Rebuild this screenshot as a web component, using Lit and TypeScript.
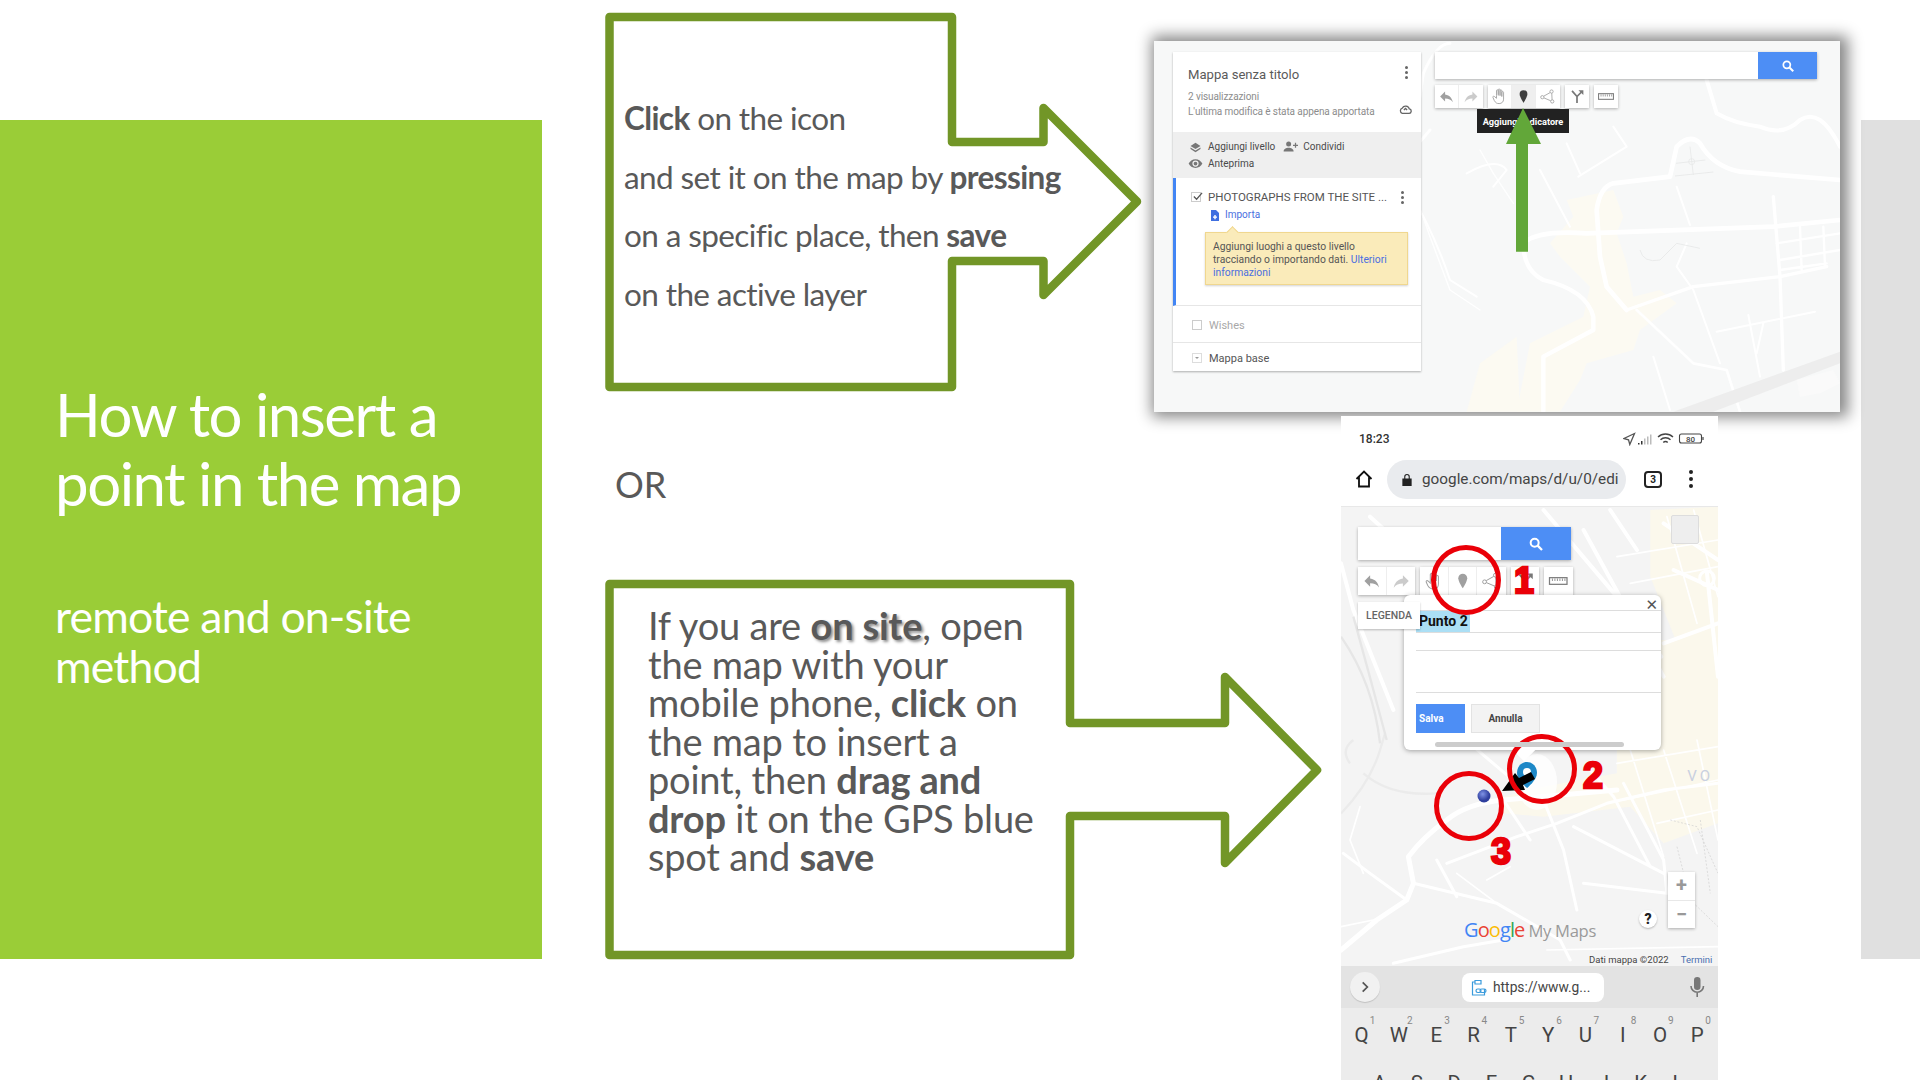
import { LitElement, html, css, svg } from "lit";
import { customElement } from "lit/decorators.js";

const ICONS: Record<string, unknown> = {
  undo: svg`<path fill="currentColor" d="M10 9V5l-7 7 7 7v-4.1c5 0 8.5 1.6 11 5.1-1-5-4-10-11-11z"/>`,
  redo: svg`<path fill="currentColor" opacity=".55" d="M14 9V5l7 7-7 7v-4.1c-5 0-8.5 1.6-11 5.1 1-5 4-10 11-11z"/>`,
  hand: svg`<path transform="translate(-3.500 -3) scale(1.250)" fill="none" stroke="currentColor" stroke-width="1" d="M9 11V5.5a1 1 0 012 0V11M11 10V4.5a1 1 0 012 0V11M13 11V5.5a1 1 0 012 0V12M15 12V7.5a1 1 0 012 0V15c0 3-2 5-5 5s-4-1-5.5-3.5L5 13a1 1 0 011.7-1L9 14V11"/>`,
  pin: svg`<path fill="currentColor" d="M12 3a5.5 5.5 0 00-5.5 5.5C6.5 12.5 12 21 12 21s5.500-8.500 5.500-12.500A5.500 5.500 0 0012 3z"/>`,
  poly: svg`<g fill="none" stroke="currentColor" stroke-width="1.2"><circle cx="17" cy="5" r="2.300"/><circle cx="4" cy="13" r="2.300"/><circle cx="18" cy="19" r="2.300"/><path d="M15 6.500L6 11.500M6.300 14l9.500 4M17.300 7.300l.5 9.400"/></g>`,
  branch: svg`<g fill="none" stroke="#777" stroke-width="2.400"><path d="M5 4l7 8v9"/><path d="M12 12l6-6"/></g><path fill="#777" d="M14 3h7v7z"/>`,
  ruler: svg`<g fill="none" stroke="#7d7d7d"><rect x="1.500" y="8" width="21" height="8" stroke-width="1.500"/><path stroke-width="1" d="M5 9v3M8 9v3M11 9v3M14 9v3M17 9v3M20 9v3"/></g>`,
};

const icon = (name: string) =>
  html`<svg class="ic" viewBox="0 0 24 24">${ICONS[name]}</svg>`;

const searchIcon = html`<svg class="sr" viewBox="0 0 24 24"><circle cx="10" cy="10" r="6" fill="none" stroke="#fff" stroke-width="3"/><path d="M14.500 14.500L21 21" stroke="#fff" stroke-width="3.400"/></svg>`;

const toolStyles = css`
  .ic { width: 100%; height: 100%; display: block; }
  .sr { display: block; }
  .tools { position: absolute; display: flex; }
  .group { display: flex; background: #fff; box-shadow: 0 1px 3px rgba(0,0,0,.3); }
  .tool { color: #a0a0a0; display: flex; align-items: center; justify-content: center; box-sizing: border-box; border-right: 1px solid #eee; }
  .tool:last-child { border-right: 0; }
  .tool.on { background: #efefef; color: #3f3f3f; }
`;

@customElement("callout-arrow")
class CalloutArrow extends LitElement {
  static properties = { points: { type: String }, vb: { type: String } };
  points = "";
  vb = "";
  static styles = css`
    :host { display: block; position: relative; }
    svg { position: absolute; inset: 0; width: 100%; height: 100%; overflow: visible; }
    polygon { fill: #fff; stroke: #729627; stroke-width: 8.5; stroke-linejoin: round; }
    .body { position: relative; }
  `;
  render() {
    return html`<svg viewBox=${this.vb}><polygon points=${this.points}></polygon></svg><div class="body"><slot></slot></div>`;
  }
}

@customElement("desktop-shot")
class DesktopShot extends LitElement {
  static styles = [toolStyles, css`
    :host { display: block; position: relative; width: 686px; height: 371px; background: #f7f8f8; box-shadow: 3px 0 14px 5px rgba(0,0,0,.48); font-family: Roboto, "Liberation Sans", sans-serif; }
    .map { position: absolute; inset: 0; width: 100%; height: 100%; }
    .card { position: absolute; left: 19px; top: 11px; width: 248px; height: 319px; background: #fff; box-shadow: 0 1px 2px rgba(0,0,0,.3); display: flex; flex-direction: column; }
    .head { height: 80px; box-sizing: border-box; padding: 15px 0 0 15px; position: relative; }
    .title { font-size: 13.100px; line-height: 16px; color: #5a5a5a; }
    .meta { font-size: 10px; line-height: 14.500px; color: #8c8c8c; margin-top: 7px; letter-spacing: -.1px; }
    .kebab { position: absolute; display: grid; gap: 2px; }
    .kebab i { display: block; width: 3px; height: 3px; border-radius: 50%; background: #666; }
    .k1 { left: 232px; top: 14px; }
    .k2 { left: 225px; top: 13px; }
    .cloud { position: absolute; left: 226px; top: 51px; width: 13px; height: 13px; }
    .actions { height: 46px; background: #efefef; box-sizing: border-box; padding: 6px 0 0 15px; font-size: 10px; color: #4a4a4a; display: grid; grid-template-rows: 17px 17px; }
    .arow { display: flex; align-items: center; }
    .a-ic { width: 15px; height: 15px; margin-right: 5px; color: #777; flex: none; }
    .a-gap { margin-left: 8px; }
    .layer { height: 128px; border-left: 3.500px solid #4285f4; box-sizing: border-box; position: relative; border-bottom: 1px solid #e6e6e6; }
    .lrow { display: flex; align-items: center; padding: 12px 0 0 15px; font-size: 11.500px; color: #555; line-height: 14px; white-space: nowrap; }
    .check { width: 10px; height: 10px; border: 1px solid #ccc; box-sizing: border-box; margin-right: 7px; flex: none; position: relative; }
    .check svg { position: absolute; left: 0; top: -2px; width: 11px; height: 11px; }
    .import { display: flex; align-items: center; padding: 5px 0 0 35px; color: #4a6fe0; font-size: 10px; line-height: 12px; }
    .import svg { width: 8px; height: 11px; margin-right: 6px; }
    .note { position: absolute; left: 29px; top: 54px; width: 203px; height: 53px; box-sizing: border-box; background: #faebba; border: 1px solid #f0d78f; box-shadow: 0 1px 2px rgba(0,0,0,.18); padding: 7px 8px 0 7px; font-size: 10.300px; line-height: 13px; color: #555; }
    .note a { color: #4a6fe0; }
    .note::before { content: ""; position: absolute; left: 22px; top: -5px; width: 8px; height: 8px; background: #faebba; border-left: 1px solid #f0d78f; border-top: 1px solid #f0d78f; transform: rotate(45deg); }
    .wishes { height: 37px; display: flex; align-items: center; padding: 2px 0 0 19px; font-size: 11px; color: #a8a8a8; border-bottom: 1px solid #e6e6e6; box-sizing: border-box; }
    .base { flex: 1; display: flex; align-items: center; padding: 2px 0 0 19px; font-size: 11px; color: #555; }
    .drop { width: 10px; height: 10px; border: 1px solid #ddd; box-sizing: border-box; margin-right: 7px; position: relative; }
    .drop::after { content: ""; position: absolute; left: 2px; top: 3px; border: 2px solid transparent; border-top: 2px solid #999; }
    .search { position: absolute; left: 281px; top: 11px; width: 382px; height: 27px; background: #fff; box-shadow: 0 1px 3px rgba(0,0,0,.3); display: flex; justify-content: flex-end; }
    .sbtn { width: 59px; background: #4d8ef5; display: flex; align-items: center; justify-content: center; }
    .sbtn .sr { width: 14px; height: 14px; }
    .tools { left: 281px; top: 44px; height: 23px; gap: 5px; }
    .tool { width: 24px; height: 23px; padding: 3px; }
    .tooltip { position: absolute; left: 323px; top: 68px; width: 92px; height: 24px; background: #222; color: #fff; font-size: 9.200px; font-weight: 700; display: flex; align-items: center; justify-content: center; white-space: nowrap; }
    .green { position: absolute; left: 0; top: 0; width: 100%; height: 100%; pointer-events: none; }
  `];
  render() {
    return html`
      <svg class="map" viewBox="-1038 33 2058 1113" preserveAspectRatio="none">
        <path fill="#fcfaf2" d="M200 510L340 480 370 560 350 610 380 700 400 800 480 780 530 820 420 900 400 960 260 1000 240 1050 180 1145 50 1145 90 940 250 860 270 770 180 680 150 640 220 560Z"/>
        <path fill="#fcfaf2" d="M50 920L-60 1000-100 1145 60 1145Z"/>
        <g fill="none" stroke="#fff" stroke-linecap="round" stroke-linejoin="round">
          <path stroke-width="12" d="M620 150L650 250Q700 280 780 290 850 320 900 270 960 230 1020 350"/>
          <path stroke-width="14" d="M1020 450L720 425Q640 410 600 340 570 310 530 350L510 440 340 460Q300 470 290 540L300 680 320 770 380 840"/>
          <path stroke-width="14" d="M70 640Q110 600 260 610L820 590 1020 570"/>
          <path stroke-width="13" d="M70 640Q70 720 130 750 260 780 280 860L280 900 130 980 130 1145"/>
          <path stroke-width="10" d="M380 840L580 770 840 740 980 710"/>
          <path stroke-width="10" d="M820 500L840 740 850 1020"/>
          <path stroke-width="8" d="M410 840L580 1000 680 1020 720 1145"/>
          <path stroke-width="6" d="M580 780L660 1000M460 980L510 1140M650 905L945 845M745 855L780 1040M790 880L770 970M530 470L570 585M560 640L530 710 580 780"/>
          <path stroke-width="7" d="M840 690L1020 660M830 640L1020 610M900 590L905 720M970 590L975 710M840 720L980 700"/>
          <path stroke-width="6" d="M120 420L210 590M235 440L380 350 340 290M200 340L240 430M-100 430Q-10 380 20 420L-20 470M-280 470Q-200 600 -150 750L-70 800"/>
          <path stroke-width="9" d="M-230 130Q-190 40 -150 40M-230 130L-240 200M-210 300Q-260 360 -240 330"/>
          <path stroke-width="4" d="M-270 450L-210 620-150 780-60 840M-60 360L-20 430 40 520"/>
        </g>
        <g fill="none" stroke="#e7e8e8" stroke-width="2.500"><circle cx="575" cy="395" r="9"/><path d="M528 400L616 390M570 350L580 435M525 438L640 426M420 660Q430 700 480 690L530 640 600 655"/></g>
        <path fill="#ededed" d="M520 1145L1020 965V1000L640 1145Z"/>
        <path fill="#fafafa" d="M890 1050L1000 1020 1020 1060 960 1090 900 1100Z"/>
      </svg>
      <div class="card">
        <div class="head">
          <div class="title">Mappa senza titolo</div>
          <div class="meta">2 visualizzazioni<br />L'ultima modifica è stata appena apportata</div>
          <div class="kebab k1"><i></i><i></i><i></i></div>
          <svg class="cloud" viewBox="0 0 24 24"><path fill="none" stroke="#666" stroke-width="2.400" d="M6 19h12a4 4 0 001-8 7 7 0 00-13-1.500A5 5 0 006 19zM9 13l3-3 3 3"/></svg>
        </div>
        <div class="actions">
          <div class="arow">
            <svg class="a-ic" viewBox="0 0 24 24"><path fill="currentColor" d="M12 16l8-5-8-5-8 5zm0 2.500l-8-5v2.500l8 5 8-5v-2.500z"/></svg>Aggiungi livello
            <svg class="a-ic a-gap" viewBox="0 0 24 24"><circle cx="9" cy="8" r="4" fill="currentColor"/><path fill="currentColor" d="M1 20c0-4 4-6 8-6s8 2 8 6zM19 6h2v3h3v2h-3v3h-2v-3h-3V9h3z"/></svg>Condividi
          </div>
          <div class="arow">
            <svg class="a-ic" viewBox="0 0 24 24"><path fill="currentColor" d="M12 5C7 5 3 8 1 12c2 4 6 7 11 7s9-3 11-7c-2-4-6-7-11-7zm0 12a5 5 0 110-10 5 5 0 010 10zm0-8a3 3 0 100 6 3 3 0 000-6z"/></svg>Anteprima
          </div>
        </div>
        <div class="layer">
          <div class="lrow"><span class="check"><svg viewBox="0 0 12 12"><path d="M2 6l3 3 6-7" fill="none" stroke="#555" stroke-width="1.300"/></svg></span>PHOTOGRAPHS FROM THE SITE ...</div>
          <div class="kebab k2"><i></i><i></i><i></i></div>
          <div class="import"><svg viewBox="0 0 8 11"><path fill="#3f6fe0" d="M0 0h5l3 3v8H0z"/><path fill="#fff" d="M3.300 5h1.400v1.500H6v1.300H4.700v1.500H3.300V7.800H2V6.500h1.300z"/></svg>Importa</div>
          <div class="note">Aggiungi luoghi a questo livello<br />tracciando o importando dati. <a>Ulteriori<br />informazioni</a></div>
        </div>
        <div class="wishes"><span class="check"></span>Wishes</div>
        <div class="base"><span class="drop"></span>Mappa base</div>
      </div>
      <div class="search"><div class="sbtn">${searchIcon}</div></div>
      <div class="tools">
        <div class="group"><div class="tool">${icon("undo")}</div><div class="tool">${icon("redo")}</div></div>
        <div class="group"><div class="tool">${icon("hand")}</div><div class="tool on">${icon("pin")}</div><div class="tool">${icon("poly")}</div></div>
        <div class="group"><div class="tool">${icon("branch")}</div></div>
        <div class="group"><div class="tool">${icon("ruler")}</div></div>
      </div>
      <div class="tooltip">Aggiungi indicatore</div>
      <svg class="green" viewBox="0 0 686 371"><path fill="#62a739" d="M369 67L387 103H374V210.700H362V103H352Z"/></svg>
    `;
  }
}

@customElement("phone-shot")
class PhoneShot extends LitElement {
  static styles = [toolStyles, css`
    :host { display: flex; flex-direction: column; width: 377px; height: 664px; overflow: hidden; background: #fff; font-family: Roboto, "Liberation Sans", sans-serif; position: relative; }
    .status { height: 44px; flex: none; display: flex; align-items: center; padding: 2px 14px 0 18px; font-size: 12px; font-weight: 500; color: #333; box-sizing: border-box; justify-content: space-between; }
    .status svg { display: block; }
    .browser { height: 47px; flex: none; display: flex; align-items: center; border-bottom: 1px solid #e8e8e8; box-sizing: border-box; padding: 0 0 8px 13px; }
    .home { width: 20px; height: 20px; margin-right: 13px; }
    .pill { width: 239px; height: 39px; border-radius: 20px; background: #e9ebee; display: flex; align-items: center; padding-left: 14px; box-sizing: border-box; font-size: 15.300px; color: #444; white-space: nowrap; overflow: hidden; }
    .lock { width: 12px; height: 13px; margin-right: 9px; flex: none; }
    .tabs { width: 18px; height: 17px; border: 2px solid #222; border-radius: 4px; box-sizing: border-box; margin-left: 18px; font-size: 10px; font-weight: 700; display: flex; align-items: center; justify-content: center; color: #222; }
    .dots { display: grid; gap: 3px; margin-left: 27px; }
    .dots i { width: 4px; height: 4px; border-radius: 50%; background: #222; display: block; }
    .mapwrap { height: 459px; position: relative; background: #f4f4f4; overflow: hidden; flex: none; }
    .map { position: absolute; inset: 0; width: 100%; height: 100%; }
    .search { position: absolute; left: 17px; top: 20px; width: 213px; height: 33px; background: #fff; box-shadow: 0 1px 3px rgba(0,0,0,.3); display: flex; justify-content: flex-end; }
    .sbtn { width: 70px; background: #4d8ef5; display: flex; align-items: center; justify-content: center; }
    .sbtn .sr { width: 16px; height: 16px; }
    .tools { left: 17px; top: 60px; height: 28px; gap: 5px; }
    .tool { width: 28.500px; height: 28px; padding: 4px; }
    .square { position: absolute; left: 330px; top: 8px; width: 28px; height: 29px; background: #eee; border: 1px solid #ddd; box-sizing: border-box; border-radius: 2px; }
    .popup { position: absolute; left: 63px; top: 88px; width: 257px; height: 155px; background: #fff; border-radius: 6px; box-shadow: 0 1px 5px rgba(0,0,0,.35); padding: 15px 0 0 12px; box-sizing: border-box; }
    .popup::after { content: ""; position: absolute; left: 112px; top: 147px; width: 16px; height: 16px; background: #fff; transform: rotate(45deg); }
    .close { position: absolute; right: 3px; top: 1px; font-size: 15px; line-height: 18px; color: #555; font-family: "DejaVu Sans", sans-serif; }
    .field { border-top: 1px solid #ddd; }
    .f1 { height: 21px; border-bottom: 1px solid #ddd; display: flex; }
    .sel { background: #abdff5; width: 54px; font-size: 14px; font-weight: 700; color: #111; line-height: 21px; padding-left: 3px; box-sizing: border-box; white-space: nowrap; }
    .f2 { height: 17px; border-bottom: 1px solid #ddd; border-top: 0; }
    .f3 { height: 41px; border-bottom: 1px solid #ddd; border-top: 0; }
    .btns { display: flex; gap: 6px; margin-top: 11px; }
    .salva { width: 49px; height: 29px; background: #4d8ef5; color: #fff; font-size: 10px; font-weight: 700; display: flex; align-items: center; padding-left: 3px; box-sizing: border-box; }
    .annulla { width: 69px; height: 29px; background: #f3f3f3; border: 1px solid #e3e3e3; box-sizing: border-box; color: #444; font-size: 10px; font-weight: 700; display: flex; align-items: center; justify-content: center; }
    .scroll { position: absolute; left: 31px; top: 147px; width: 189px; height: 5px; background: #ccc; border-radius: 3px; z-index: 1; }
    .legend { position: absolute; left: 17px; top: 95px; width: 62px; height: 27px; background: #fff; box-shadow: 0 1px 2px rgba(0,0,0,.25); font-size: 10.500px; font-weight: 500; color: #666; display: flex; align-items: center; justify-content: center; z-index: 2; }
    .glow { position: absolute; left: 176px; top: 247px; width: 40px; height: 56px; border-radius: 50%; background: #fff; opacity: .8; }
    .zoom { position: absolute; left: 327px; top: 365px; width: 27px; height: 56px; background: #fff; box-shadow: 0 1px 3px rgba(0,0,0,.3); display: grid; grid-template-rows: 1fr 1fr; color: #999; font-size: 20px; font-weight: 700; line-height: 27px; text-align: center; }
    .zoom span + span { border-top: 1px solid #e8e8e8; }
    .q { position: absolute; left: 298px; top: 403px; width: 18px; height: 18px; border-radius: 50%; background: #fff; box-shadow: 0 1px 2px rgba(0,0,0,.25); font-size: 14px; font-weight: 900; color: #222; text-align: center; line-height: 18px; }
    .logo { position: absolute; left: 123px; top: 411px; font-family: "Open Sans", sans-serif; font-size: 20px; line-height: 24px; letter-spacing: -.9px; white-space: nowrap; display: flex; gap: 4px; align-items: baseline; }
    .logo b { font-weight: 500; }
    .logo .my { color: #9a9a9a; font-size: 16.600px; letter-spacing: -.3px; }
    .c-b { color: #4285f4; } .c-r { color: #ea4335; } .c-y { color: #fbbc05; } .c-g { color: #34a853; }
    .attr { position: absolute; left: 248px; top: 446px; font-size: 9.500px; line-height: 14px; color: #444; white-space: nowrap; display: flex; gap: 12px; }
    .attr a { color: #4a6fb0; }
    .vo { position: absolute; right: 5px; top: 260px; font-size: 15px; letter-spacing: 3px; color: #c9d0e0; white-space: nowrap; }
    .sugg { height: 42px; background: #e3e3e3; display: flex; align-items: center; padding: 0 0 0 9px; box-sizing: border-box; flex: none; }
    .chev { width: 30px; height: 30px; border-radius: 50%; background: #f1f1f1; box-shadow: 0 1px 1px rgba(0,0,0,.15); display: flex; align-items: center; justify-content: center; }
    .chev svg { width: 14px; height: 14px; }
    .chip { margin-left: 82px; width: 142px; height: 29px; background: #fff; border-radius: 8px; display: flex; align-items: center; padding-left: 9px; box-sizing: border-box; font-size: 13.800px; color: #444; gap: 6px; white-space: nowrap; }
    .chip svg { width: 16px; height: 17px; flex: none; }
    .mic { width: 18px; height: 20px; margin-left: 84px; }
    .keys { background: #ececec; flex: none; display: grid; grid-auto-rows: 48px; padding-top: 3px; height: 72px; box-sizing: border-box; font-size: 20.500px; color: #444; }
    .krow { display: grid; grid-template-columns: repeat(10, 37.300px); padding-left: 2px; }
    .krow.two { grid-template-columns: repeat(9, 37.300px); padding-left: 20px; }
    .key { position: relative; text-align: center; line-height: 48px; }
    .key sup { position: absolute; right: 5px; top: 4px; font-size: 10px; line-height: 12px; color: #888; }
    .notes { position: absolute; left: 0; top: 0; width: 377px; height: 664px; pointer-events: none; }
    .num { font-family: "Liberation Sans", sans-serif; font-size: 36px; font-weight: 700; fill: #ea0008; stroke: #ea0008; stroke-width: 2.400px; text-anchor: middle; }
  `];
  render() {
    const r1 = [["Q","1"],["W","2"],["E","3"],["R","4"],["T","5"],["Y","6"],["U","7"],["I","8"],["O","9"],["P","0"]];
    const r2 = ["A","S","D","F","G","H","J","K","L"];
    return html`
      <div class="status"><span>18:23</span>
        <svg width="81" height="14" viewBox="0 0 81 14">
          <path d="M11.500 1.500L1 6.500l4.500 1.300 1.300 4.700z" fill="none" stroke="#555" stroke-width="1.300"/>
          <path d="M15 11h1.500v1.500H15zM18 9h1.500v3.500H18z" fill="#333"/><path d="M21 6.500h1.500v6H21zM24 4.500h1.500v8H24zM27 2.500h1.500v10H27z" fill="#bbb"/>
          <path d="M35 5a11 11 0 0115 0M37.500 7.800a7 7 0 0110 0M40.300 10.500a3 3 0 014.400 0" fill="none" stroke="#444" stroke-width="1.400"/>
          <rect x="56.500" y="2" width="22" height="9" rx="2" fill="none" stroke="#444" stroke-width="1.100"/><path d="M80 5v3" stroke="#444" stroke-width="1.200"/>
          <text x="67.500" y="9.500" font-size="8" fill="#444" text-anchor="middle">80</text>
        </svg>
      </div>
      <div class="browser">
        <svg class="home" viewBox="0 0 24 24"><path d="M3 12L12 3l9 9M6 10v11h12V10" fill="none" stroke="#111" stroke-width="2.200"/></svg>
        <div class="pill"><svg class="lock" viewBox="0 0 12 14"><path fill="#222" d="M1 6h10v8H1zM3 6V4a3 3 0 016 0v2H7.800V4a1.800 1.800 0 00-3.600 0v2z"/></svg>google.com/maps/d/u/0/edi</div>
        <div class="tabs">3</div>
        <div class="dots"><i></i><i></i><i></i></div>
      </div>
      <div class="mapwrap">
        <svg class="map" viewBox="33 291 1130 1377" preserveAspectRatio="none">
          <path fill="#fbf8ec" d="M960 300L1163 290V740L1040 700 960 500Z"/>
          <g transform="translate(0 990)">
            <path fill="#fbf8ec" d="M860 -300L1163 -300 1163 250 1000 310 900 200 640 230 520 220 520 170 640 140 860 100Z"/>
            <g fill="none" stroke="#fff" stroke-linecap="round" stroke-linejoin="round">
              <path stroke-width="15" d="M33 630L140 540 230 480 250 430 235 350Q280 290 350 240 410 190 520 180L860 150"/>
              <path stroke-width="9" d="M350 370L560 290 680 250 830 190 1000 150 1163 130M520 180L600 300M640 180L700 330 740 510M250 430L500 490 690 600 720 660M190 670L400 620 520 600M40 340L120 400 230 480M320 360L380 470M880 130L1000 360 1010 460 760 430M850 170L960 380M730 260L1000 400M430 20L560 130M780 90L850 170"/>
              <path stroke-width="5" d="M33 560L130 540M90 200L60 300 100 400M380 400L500 490M470 420L540 380M650 630L1163 620M900 30L1000 350M1000 30L1100 340M1100 0L1163 300M860 70L1163 20M880 180L1163 120M980 250L1163 210"/>
            </g>
            <g fill="none" stroke="#ebebeb" stroke-width="7"><path d="M33 220Q120 130 150 30L165 -20M100 100Q180 170 320 160M60 70Q30 30 70 0"/></g>
            <g fill="none" stroke="#cfcfcf" stroke-width="2" stroke-dasharray="6 5"><path d="M1020 240L1100 260 1163 400M1040 320L1080 480 1163 560M1110 240L1140 460"/></g>
          </g>
          <g fill="none" stroke="#fff" stroke-linecap="round" stroke-linejoin="round">
            <path stroke-width="12" d="M640 300L860 560 993 740M120 320L230 420M760 360L1000 800M840 300L920 420M1000 340L1163 450M1030 480L1163 540M1163 640L1000 700M1130 490L1163 800M33 460L70 600 190 900"/>
            <path stroke-width="5" d="M860 440L1163 390M900 520L1163 470M1010 320L1100 640M1090 300L1163 560"/>
          </g>
          <circle cx="1130" cy="505" r="22" fill="none" stroke="#fff" stroke-width="9"/>
          <g fill="none" stroke="#e6e6e6" stroke-width="7"><path d="M33 680Q130 820 150 1000 M70 620Q120 800 170 990"/></g>
        </svg>
        <div class="vo">VO</div>
        <div class="square"></div>
        <div class="search"><div class="sbtn">${searchIcon}</div></div>
        <div class="tools">
          <div class="group"><div class="tool">${icon("undo")}</div><div class="tool">${icon("redo")}</div></div>
          <div class="group"><div class="tool">${icon("hand")}</div><div class="tool">${icon("pin")}</div><div class="tool">${icon("poly")}</div></div>
          <div class="group"><div class="tool">${icon("branch")}</div></div>
          <div class="group"><div class="tool">${icon("ruler")}</div></div>
        </div>
        <div class="glow"></div>
        <div class="popup">
          <div class="close">✕</div>
          <div class="field f1"><div class="sel">Punto 2</div></div>
          <div class="field f2"></div>
          <div class="field f3"></div>
          <div class="btns"><div class="salva">Salva</div><div class="annulla">Annulla</div></div>
          <div class="scroll"></div>
        </div>
        <div class="legend">LEGENDA</div>
        <div class="zoom"><span>+</span><span>−</span></div>
        <div class="q">?</div>
        <div class="logo"><span><b class="c-b">G</b><b class="c-r">o</b><b class="c-y">o</b><b class="c-b">g</b><b class="c-g">l</b><b class="c-r">e</b></span><span class="my">My Maps</span></div>
        <div class="attr"><span>Dati mappa ©2022</span><a>Termini</a></div>
      </div>
      <div class="sugg">
        <div class="chev"><svg viewBox="0 0 24 24"><path d="M8 4l8 8-8 8" fill="none" stroke="#555" stroke-width="3"/></svg></div>
        <div class="chip"><svg viewBox="0 0 16 17"><g fill="none" stroke="#3a9bdc" stroke-width="1.200"><path d="M4 3H1.500v13h12v-6M4 1.500h6V5H4z"/><rect x="5" y="10" width="5" height="3.500" rx="1.700"/><rect x="9" y="10" width="6" height="3.500" rx="1.700"/></g></svg>https://www.g...</div>
        <svg class="mic" viewBox="0 0 18 20"><rect x="6" y="0" width="6.500" height="13" rx="3.200" fill="#777"/><path d="M3 9a6 6 0 0012.500 0M9.200 15v5" fill="none" stroke="#777" stroke-width="1.600"/></svg>
      </div>
      <div class="keys">
        <div class="krow">${r1.map(([k, n]) => html`<div class="key">${k}<sup>${n}</sup></div>`)}</div>
        <div class="krow two">${r2.map((k) => html`<div class="key">${k}</div>`)}</div>
      </div>
      <svg class="notes" viewBox="0 0 377 664">
        <defs><radialGradient id="gps" cx=".4" cy=".35"><stop offset="0" stop-color="#7f93e6"/><stop offset="1" stop-color="#2f3f9e"/></radialGradient></defs>
        <path fill="#1e88c7" d="M186 346c-6 0-10 5-10 11 0 7 10 15 10 15s10-8 10-15c0-6-4-11-10-11z"/><circle cx="186" cy="356" r="4" fill="#fff"/>
        <circle cx="143" cy="380" r="6.500" fill="url(#gps)"/>
        <path fill="#000" d="M161 375L174 357 178 362 190 356 194 363 182 369 184 374Z"/>
        <g fill="none" stroke="#ea0008" stroke-width="5"><circle cx="125" cy="164" r="32.500"/><circle cx="201" cy="353" r="32.500"/><circle cx="128" cy="390" r="32.500"/></g>
        <text class="num" x="183" y="177">1</text>
        <text class="num" x="252" y="372">2</text>
        <text class="num" x="160" y="448">3</text>
      </svg>
    `;
  }
}

@customElement("app-root")
export class AppRoot extends LitElement {
  static styles = css`
    :host { display: block; width: 1920px; height: 1080px; overflow: hidden; background: #fff; font-family: Lato, "Open Sans", sans-serif; }
    .slide { display: grid; grid-template-columns: 542px 1fr 59px; height: 1080px; }
    .panel { margin-top: 120px; height: 839px; background: #9acd37; color: #fff; box-sizing: border-box; padding: 260px 0 0 55px; }
    .h1 { font-size: 60px; font-weight: 400; line-height: 69px; letter-spacing: -1.500px; }
    .h2 { font-size: 44.500px; font-weight: 400; line-height: 50px; margin-top: 73px; letter-spacing: -.8px; }
    .right { margin-top: 120px; height: 839px; background: #e0e0e0; }
    .mid { padding-left: 63px; display: flex; flex-direction: column; position: relative; z-index: 1; }
    .rowa { height: 416px; display: flex; align-items: flex-start; gap: 13px; flex: none; }
    .rowb { display: flex; align-items: flex-start; gap: 20px; position: relative; z-index: 1; }
    .a1 { width: 536px; height: 380px; margin-top: 12px; flex: none; }
    .shot { margin-top: 41px; flex: none; }
    .col { width: 716px; flex: none; }
    .or { margin: 45px 0 0 10px; height: 46px; line-height: 46px; font-size: 36px; color: #595959; }
    .a2 { width: 716px; height: 380px; margin-top: 73px; }
    .t1 { padding: 77px 0 0 19px; font-size: 31.500px; line-height: 58.700px; color: #595959; white-space: nowrap; letter-spacing: -.6px; }
    .t2 { padding: 26px 0 0 43px; font-size: 38px; line-height: 38.500px; color: #595959; white-space: nowrap; letter-spacing: -.2px; }
    .glow-b { text-shadow: 2px 2px 3px rgba(0,0,0,.45); }
    b { font-weight: 700; }
  `;
  render() {
    return html`
      <div class="slide">
        <div class="panel">
          <div class="h1">How to insert a<br />point in the map</div>
          <div class="h2">remote and on-site<br />method</div>
        </div>
        <div class="mid">
          <div class="rowa">
            <callout-arrow class="a1" vb="0 0 536 380" points="4.500,5 347,5 347,130 438.500,130 438.500,96 532,189.500 438.500,283 438.500,249 347,249 347,375 4.500,375">
              <div class="t1"><b>Click</b> on the icon<br />and set it on the map by <b>pressing</b><br />on a specific place, then <b>save</b><br />on the active layer</div>
            </callout-arrow>
            <desktop-shot class="shot"></desktop-shot>
          </div>
          <div class="rowb">
            <div class="col">
              <div class="or">OR</div>
              <callout-arrow class="a2" vb="0 0 716 380" points="4.500,4 465,4 465,143 620,143 620,97 712,190 620,283 620,236 465,236 465,375 4.500,375">
                <div class="t2">If you are <b class="glow-b">on site</b>, open<br />the map with your<br />mobile phone, <b>click</b> on<br />the map to insert a<br />point, then <b>drag and</b><br /><b>drop</b> it on the GPS blue<br />spot and <b>save</b></div>
              </callout-arrow>
            </div>
            <phone-shot></phone-shot>
          </div>
        </div>
        <div class="right"></div>
      </div>
    `;
  }
}
